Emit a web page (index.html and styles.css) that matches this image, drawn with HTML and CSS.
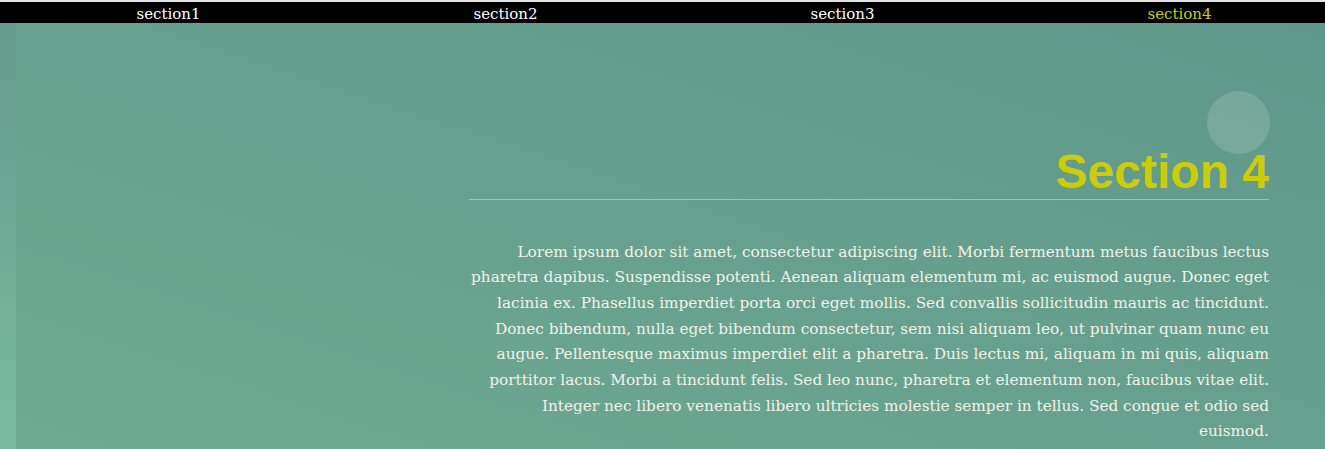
FILE: index.html
```html
<!DOCTYPE html>
<html lang="en">
<head>
<meta charset="utf-8">
<title>Section 4</title>
<link rel="stylesheet" href="styles.css">
</head>
<body>
<div class="topline"></div>
<nav class="nav">
  <a class="nav-item" href="#s1">section1</a>
  <a class="nav-item" href="#s2">section2</a>
  <a class="nav-item" href="#s3">section3</a>
  <a class="nav-item active" href="#s4">section4</a>
</nav>
<div class="page">
  <div class="edge"></div>
  <section class="section" id="s4">
    <div class="content">
      <header class="head">
        <span class="bubble"></span>
        <h2 class="title">Section 4</h2>
      </header>
      <p class="text">Lorem ipsum dolor sit amet, consectetur adipiscing elit. Morbi fermentum metus faucibus lectus pharetra dapibus. Suspendisse potenti. Aenean aliquam elementum mi, ac euismod augue. Donec eget lacinia ex. Phasellus imperdiet porta orci eget mollis. Sed convallis sollicitudin mauris ac tincidunt. Donec bibendum, nulla eget bibendum consectetur, sem nisi aliquam leo, ut pulvinar quam nunc eu augue. Pellentesque maximus imperdiet elit a pharetra. Duis lectus mi, aliquam in mi quis, aliquam porttitor lacus. Morbi a tincidunt felis. Sed leo nunc, pharetra et elementum non, faucibus vitae elit. Integer nec libero venenatis libero ultricies molestie semper in tellus. Sed congue et odio sed euismod.</p>
    </div>
  </section>
</div>
</body>
</html>
```

FILE: styles.css
```css
html, body {
  margin: 0;
  padding: 0;
}
body {
  width: 1325px;
  height: 449px;
  overflow: hidden;
  background: #65998b;
  font-family: "DejaVu Serif", serif;
}
.topline {
  height: 2px;
  background: #e4e4e4;
}
.nav {
  display: grid;
  grid-template-columns: repeat(4, 337px);
  height: 21px;
  background: #000;
  overflow: hidden;
}
.nav-item {
  color: #fff;
  text-decoration: none;
  text-align: center;
  font-size: 15px;
  line-height: 22px;
  padding-top: 1px;
}
.nav-item.active {
  color: #cccc00;
}
.page {
  display: flex;
  height: 426px;
}
.edge {
  width: 16px;
  flex: none;
  background: linear-gradient(to bottom, #659a8c, #7bbaa1);
}
.section {
  flex: 1;
  background: linear-gradient(to bottom left, #5f978a, #6fa992);
  padding: 125px 56px 0 453px;
}
.content {
  width: 800px;
}
.head {
  position: relative;
  padding-bottom: 3px;
  border-bottom: 1px solid #c3c74e;
}
.bubble {
  position: absolute;
  right: -1px;
  top: -57px;
  width: 63px;
  height: 63px;
  border-radius: 50%;
  background: rgba(255, 255, 255, 0.15);
}
.title {
  position: relative;
  margin: 0;
  text-align: right;
  font-family: "Liberation Sans", Arial, sans-serif;
  font-weight: 700;
  font-size: 48px;
  line-height: 48px;
  color: #cccc0a;
}
.text {
  margin: 39.5px 0 0;
  text-align: right;
  color: #f2f2e8;
  font-size: 15.3px;
  line-height: 25.7px;
}
```
